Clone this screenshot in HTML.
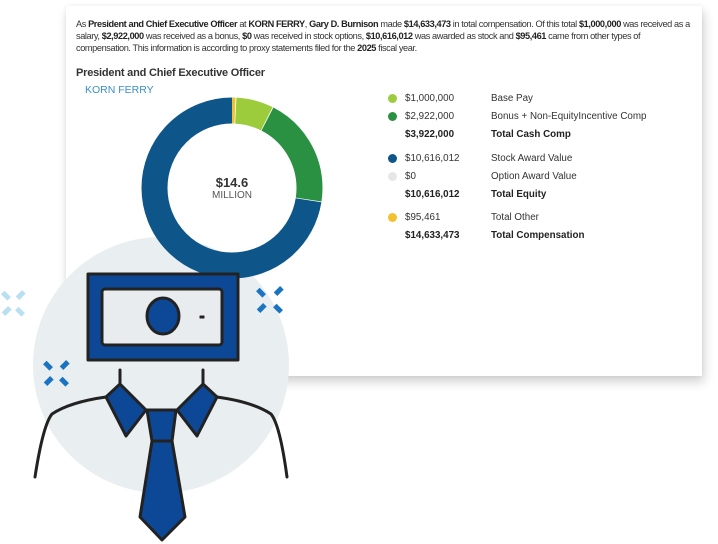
<!DOCTYPE html>
<html><head><meta charset="utf-8"><style>
*{margin:0;padding:0;box-sizing:border-box}
body{width:718px;height:544px;background:#fff;position:relative;overflow:hidden;font-family:"Liberation Sans",sans-serif;color:#333}
.card{position:absolute;left:66px;top:6px;width:636px;height:370px;background:#fff;box-shadow:2px 6px 10px rgba(0,0,0,.18),0 0 4px rgba(0,0,0,.06)}
.p{position:absolute;left:76px;top:18px;white-space:nowrap;font-size:9.2px;line-height:12px;letter-spacing:-0.4px;color:#333}
.p b{color:#222}
.h{position:absolute;left:76px;top:67px;font-size:11px;font-weight:bold;color:#333;letter-spacing:-0.2px}
.k{position:absolute;left:85px;top:84px;font-size:10.5px;color:#3a8fc8}
.r{position:absolute;font-size:9.8px;color:#333;white-space:nowrap}
.r b{font-weight:bold;color:#222}
.dot{position:absolute;width:9px;height:9px;border-radius:50%}
</style></head><body>
<div class="card"></div>
<div class="p">As <b>President and Chief Executive Officer</b> at <b>KORN FERRY</b>, <b>Gary D. Burnison</b> made <b>$14,633,473</b> in total compensation. Of this total <b>$1,000,000</b> was received as a<br>salary, <b>$2,922,000</b> was received as a bonus, <b>$0</b> was received in stock options, <b>$10,616,012</b> was awarded as stock and <b>$95,461</b> came from other types of<br>compensation. This information is according to proxy statements filed for the <b>2025</b> fiscal year.</div>
<div class="h">President and Chief Executive Officer</div>
<div class="k">KORN FERRY</div>

<svg style="position:absolute;left:0;top:0" width="718" height="544">
<circle cx="161" cy="365" r="128" fill="#e9eef0"/>
<g transform="translate(232,188) rotate(-90)" fill="none" stroke-width="26">
<circle r="77.5" stroke="#f2c12e" stroke-dasharray="3 484"/>
<circle r="77.5" stroke="#9ccc3c" stroke-dasharray="32.2 454.7" stroke-dashoffset="-3.8"/>
<circle r="77.5" stroke="#2a9142" stroke-dasharray="96.5 390.4" stroke-dashoffset="-36.8"/>
<circle r="77.5" stroke="#0e5689" stroke-dasharray="352.8 134.1" stroke-dashoffset="-134"/>
</g>
<text x="232" y="187" text-anchor="middle" font-family="Liberation Sans" font-weight="bold" font-size="13" fill="#333">$14.6</text>
<text x="232" y="198" text-anchor="middle" font-family="Liberation Sans" font-size="10" fill="#555">MILLION</text>

<g fill="#b9dff2">
<rect x="2" y="293" width="9" height="5" transform="rotate(45 6 295)"/>
<rect x="16" y="293" width="9" height="5" transform="rotate(-45 20 295)"/>
<rect x="2" y="309" width="9" height="5" transform="rotate(-45 6 311)"/>
<rect x="16" y="309" width="9" height="5" transform="rotate(45 20 311)"/>
</g>
<g fill="#1a74c2">
<rect x="44" y="363" width="9" height="5" transform="rotate(45 48 365)"/>
<rect x="60" y="363" width="9" height="5" transform="rotate(-45 64 365)"/>
<rect x="44" y="379" width="9" height="5" transform="rotate(-45 48 381)"/>
<rect x="60" y="379" width="9" height="5" transform="rotate(45 64 381)"/>
<rect x="257" y="290" width="9" height="5" transform="rotate(45 261 292)"/>
<rect x="274" y="289" width="9" height="5" transform="rotate(-45 278 291)"/>
<rect x="257" y="306" width="9" height="5" transform="rotate(-45 261 308)"/>
<rect x="274" y="306" width="9" height="5" transform="rotate(45 278 308)"/>
</g>
<g stroke="#222" stroke-width="3" stroke-linejoin="round" stroke-linecap="round">
<rect x="88" y="274" width="150" height="86" fill="#0d4897"/>
<rect x="102" y="289" width="120" height="56" rx="3" fill="#e9ecef"/>
<ellipse cx="163" cy="316" rx="16" ry="18" fill="#0d4897"/>
<rect x="200" y="316" width="4" height="2" fill="#222" stroke-width="1"/>
<path d="M120 370V384M203 370V384" fill="none"/>
<path d="M106 397Q70 402 52 414Q43 425 35 477M217 397Q253 402 271 414Q280 425 287 477" fill="none"/>
<path d="M120 384L106 397L126 436L146 410Z" fill="#0d4897"/>
<path d="M203 384L217 397L197 436L177 410Z" fill="#0d4897"/>
<path d="M147 410H176L172 441H152Z" fill="#0d4897"/>
<path d="M152 441H172L185 517L162 540L140 517Z" fill="#0d4897"/>
</g>
</svg>

<div class="dot" style="left:388px;top:94px;background:#9ccc3c"></div>
<div class="dot" style="left:388px;top:112px;background:#2a9142"></div>
<div class="dot" style="left:388px;top:154px;background:#0e5689"></div>
<div class="dot" style="left:388px;top:172px;background:#e6e6e6"></div>
<div class="dot" style="left:388px;top:213px;background:#f2c12e"></div>

<div class="r" style="left:405px;top:93px">$1,000,000</div><div class="r" style="left:491px;top:93px">Base Pay</div>
<div class="r" style="left:405px;top:111px">$2,922,000</div><div class="r" style="left:491px;top:111px">Bonus + Non-EquityIncentive Comp</div>
<div class="r" style="left:405px;top:129px"><b>$3,922,000</b></div><div class="r" style="left:491px;top:129px"><b>Total Cash Comp</b></div>
<div class="r" style="left:405px;top:153px">$10,616,012</div><div class="r" style="left:491px;top:153px">Stock Award Value</div>
<div class="r" style="left:405px;top:171px">$0</div><div class="r" style="left:491px;top:171px">Option Award Value</div>
<div class="r" style="left:405px;top:189px"><b>$10,616,012</b></div><div class="r" style="left:491px;top:189px"><b>Total Equity</b></div>
<div class="r" style="left:405px;top:212px">$95,461</div><div class="r" style="left:491px;top:212px">Total Other</div>
<div class="r" style="left:405px;top:230px"><b>$14,633,473</b></div><div class="r" style="left:491px;top:230px"><b>Total Compensation</b></div>
</body></html>
